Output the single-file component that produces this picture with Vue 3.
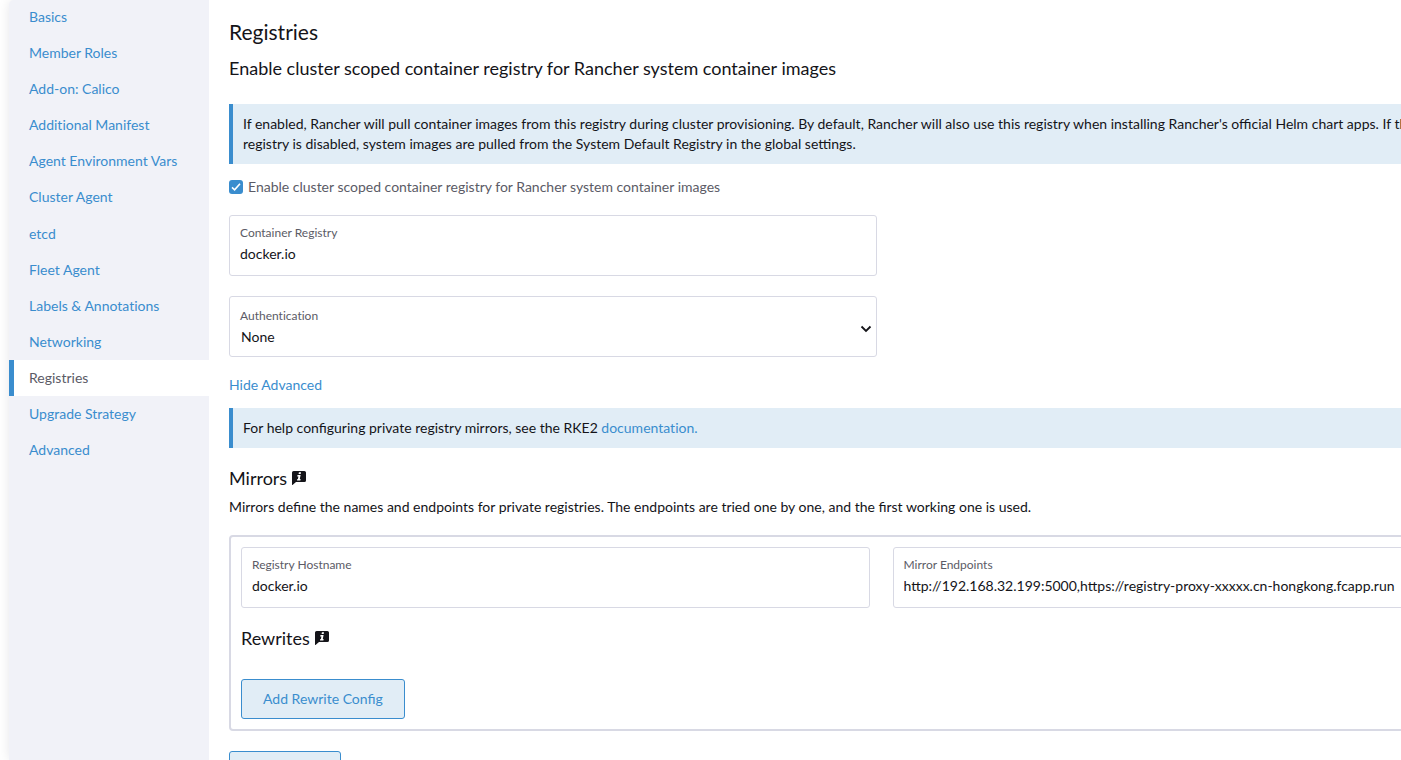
<script setup>
import { ref } from 'vue'

const tabs = [
  'Basics', 'Member Roles', 'Add-on: Calico', 'Additional Manifest',
  'Agent Environment Vars', 'Cluster Agent', 'etcd', 'Fleet Agent',
  'Labels & Annotations', 'Networking', 'Registries', 'Upgrade Strategy', 'Advanced'
]
const active = ref('Registries')
const enabled = ref(true)
const registry = ref('docker.io')
const auth = ref('None')
const hostname = ref('docker.io')
const endpoints = ref('http://192.168.32.199:5000,https://registry-proxy-xxxxx.cn-hongkong.fcapp.run')
const advanced = ref(true)
</script>

<template>
  <div class="page">
    <nav class="tabs">
      <a
        v-for="t in tabs"
        :key="t"
        href="#"
        class="tab"
        :class="{ active: t === active }"
        @click.prevent="active = t"
      >{{ t }}</a>
    </nav>

    <main class="content">
      <h1>Registries</h1>
      <h2 class="subtitle">Enable cluster scoped container registry for Rancher system container images</h2>

      <div class="banner">
        If enabled, Rancher will pull container images from this registry during cluster provisioning. By default, Rancher will also use this registry when installing Rancher's official Helm chart apps. If the cluster scoped registry is disabled, system images are pulled from the System Default Registry in the global settings.
      </div>

      <label class="check">
        <input v-model="enabled" type="checkbox">
        <span class="box">
          <svg v-if="enabled" viewBox="0 0 14 14" width="14" height="14" aria-hidden="true">
            <path d="M3 7.4 5.6 9.8 11 3.8" fill="none" stroke="#fff" stroke-width="1.6" />
          </svg>
        </span>
        <span>Enable cluster scoped container registry for Rancher system container images</span>
      </label>

      <div class="row">
        <div class="field">
          <label for="registry">Container Registry</label>
          <input id="registry" v-model="registry" type="text">
        </div>
      </div>

      <div class="row">
        <div class="field select">
          <label for="auth">Authentication</label>
          <select id="auth" v-model="auth">
            <option>None</option>
          </select>
          <svg class="chevron" viewBox="0 0 12 8" width="12" height="8" aria-hidden="true">
            <path d="M1.5 1.5 6 6 10.5 1.5" fill="none" stroke="#141419" stroke-width="1.8" />
          </svg>
        </div>
      </div>

      <a href="#" class="toggle" @click.prevent="advanced = !advanced">Hide Advanced</a>

      <div class="banner help">
        For help configuring private registry mirrors, see the RKE2 <a href="#">documentation.</a>
      </div>

      <h2 class="heading">
        Mirrors
        <svg class="info" viewBox="0 0 14 14" width="14" height="14" aria-hidden="true">
          <path d="M1.6 0H12.4Q14 0 14 1.6V9.4Q14 11 12.4 11H4L.5 14Q0 14 0 13.4V1.6Q0 0 1.6 0Z" fill="#141419" />
          <path d="M6.9 1.3H9L8.7 3.1H6.6ZM5.5 4.1H8.6L7.8 8.1H8.6L8.4 9.5H5L5.3 8.1H5.9L6.4 5.4H5.2Z" fill="#fff" />
        </svg>
      </h2>
      <p class="description">Mirrors define the names and endpoints for private registries. The endpoints are tried one by one, and the first working one is used.</p>

      <section class="mirror">
        <div class="row mirror-row">
          <div class="field">
            <label for="hostname">Registry Hostname</label>
            <input id="hostname" v-model="hostname" type="text">
          </div>
          <div class="field">
            <label for="endpoints">Mirror Endpoints</label>
            <input id="endpoints" v-model="endpoints" type="text">
          </div>
        </div>
        <h2 class="heading">
          Rewrites
          <svg class="info" viewBox="0 0 14 14" width="14" height="14" aria-hidden="true">
            <path d="M1.6 0H12.4Q14 0 14 1.6V9.4Q14 11 12.4 11H4L.5 14Q0 14 0 13.4V1.6Q0 0 1.6 0Z" fill="#141419" />
            <path d="M6.9 1.3H9L8.7 3.1H6.6ZM5.5 4.1H8.6L7.8 8.1H8.6L8.4 9.5H5L5.3 8.1H5.9L6.4 5.4H5.2Z" fill="#fff" />
          </svg>
        </h2>
        <button type="button" class="btn">Add Rewrite Config</button>
      </section>

      <button type="button" class="btn add">Add Mirror</button>
    </main>
  </div>
</template>

<style>
body {
  background: #fff;
}
</style>

<style scoped>
.page {
  display: flex;
  height: 100vh;
  overflow: hidden;
  padding-left: 9px;
  font: 14px/20px Lato, "Liberation Sans", sans-serif;
  color: #141419;
}
.page * {
  box-sizing: border-box;
}
a {
  color: #3a8dce;
  text-decoration: none;
}
a,
label {
  font-variant-ligatures: none;
}
.tabs {
  flex: 0 0 200px;
  background: #f1f2f8;
  border-top-left-radius: 5px;
  box-shadow: 0 0 12px rgba(20, 20, 40, 0.1);
  clip-path: inset(0 0 0 -9px);
}
.tab {
  display: block;
  padding: 8px 15px 8px 20px;
}
.tab:nth-child(-n + 6) {
  padding: 7px 15px 9px 20px;
}
.tab.active {
  padding-left: 15px;
  border-left: 5px solid #3a8dce;
  background: #fff;
  color: #5b5b66;
}
/* The form is wider than the viewport and is clipped at its right edge. */
.content {
  flex: 1;
  min-width: 0;
  margin-right: -147px;
  padding: 19px 0 0 20px;
}
h1,
h2,
p {
  margin: 0;
  font-weight: 400;
}
h1 {
  font-size: 21px;
  line-height: 26px;
}
h2 {
  font-size: 18px;
  line-height: 22px;
}
.subtitle {
  margin: 12px 0 25px;
}
.banner {
  padding: 10px;
  border-left: 4px solid #3a8dce;
  background: #e1edf6;
}
.check {
  display: flex;
  align-items: center;
  width: fit-content;
  position: relative;
  gap: 5px;
  margin: 13px 0 18px;
  color: #5b5b66;
}
.check input {
  position: absolute;
  width: 14px;
  height: 14px;
  margin: 0;
  opacity: 0;
}
.box {
  width: 14px;
  height: 14px;
  border-radius: 3px;
  background: #3a8dce;
}
.box svg {
  display: block;
}
.row {
  display: grid;
  grid-template-columns: 1fr 1fr;
  gap: 23px;
  margin-bottom: 20px;
}
.field {
  position: relative;
  height: 61px;
  padding: 8px 10px;
  border: 1px solid #d8d9e4;
  border-radius: 3px;
}
.field label {
  display: block;
  font-size: 12px;
  line-height: 18px;
  color: #5b5b66;
}
.field input,
.field select {
  display: block;
  width: 100%;
  height: 22px;
  padding: 0;
  border: 0;
  outline: 0;
  background: none;
  font: inherit;
  color: inherit;
  appearance: none;
}
.field.select {
  padding-top: 10px;
}
.field select {
  height: 24px;
  padding-left: 1px;
}
.chevron {
  position: absolute;
  right: 4px;
  top: 28px;
}
.toggle {
  display: block;
  width: fit-content;
  margin: 18px 0 13px;
}
.row + .toggle {
  margin-top: -2px;
}
.heading {
  display: flex;
  align-items: center;
  gap: 5px;
}
.help {
  margin-bottom: 19px;
}
.description {
  margin: 8px 0 18px;
}
.mirror {
  padding: 10px;
  border: 2px solid #d8d9e4;
  border-radius: 4px;
}
.mirror-row {
  margin: 0 15px 19px 0;
}
.btn {
  height: 40px;
  padding: 0 21px;
  border: 1px solid #3a8dce;
  border-radius: 3px;
  background: #e1edf6;
  color: #3a8dce;
  font: inherit;
}
.mirror .btn {
  display: block;
  margin-top: 30px;
}
.add {
  margin-top: 20px;
}
</style>
